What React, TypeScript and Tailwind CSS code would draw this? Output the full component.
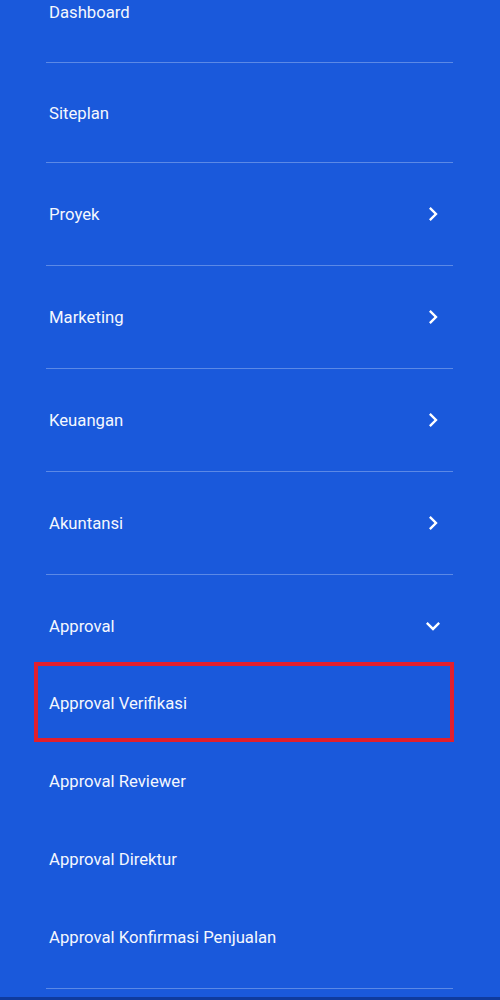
import React from "react";

const ChevronRight = () => (
  <svg width="28" height="28" viewBox="0 0 24 24" fill="white">
    <path d="M10 6L8.59 7.41 13.17 12l-4.58 4.59L10 18l6-6z" />
  </svg>
);

const ChevronDown = () => (
  <svg width="28" height="28" viewBox="0 0 24 24" fill="white">
    <path d="M16.59 8.59L12 13.17 7.41 8.59 6 10l6 6 6-6z" />
  </svg>
);

const menu = [
  { label: "Siteplan", arrow: false, h: "h-[100px]" },
  { label: "Proyek", arrow: true, h: "h-[103px]" },
  { label: "Marketing", arrow: true, h: "h-[103px]" },
  { label: "Keuangan", arrow: true, h: "h-[103px]" },
  { label: "Akuntansi", arrow: true, h: "h-[103px]" },
];

const subMenu = [
  "Approval Verifikasi",
  "Approval Reviewer",
  "Approval Direktur",
  "Approval Konfirmasi Penjualan",
];

export default function App() {
  return (
    <div
      className="w-[500px] h-[1000px] overflow-hidden bg-[#1a59db] flex flex-col"
      style={{ fontFamily: "Roboto, 'Noto Sans', sans-serif" }}
    >
      <div className="ml-[46px] w-[407px] -mt-[39px] flex flex-col text-[#f4f7fe] text-[16.7px]">
        <div className="h-[102px] flex items-center pl-[3px] pt-[2px] border-b border-[#5b89e6]">
          Dashboard
        </div>
        {menu.map((m) => (
          <div
            key={m.label}
            className={`${m.h} flex items-center justify-between pl-[3px] pr-[6px] border-b border-[#5b89e6]`}
          >
            <span className="pt-[2px]">{m.label}</span>
            {m.arrow && <ChevronRight />}
          </div>
        ))}
        <div className="border-b border-[#5b89e6] pb-[12px]">
          <div className="h-[89px] pt-[13px] flex items-center justify-between pl-[3px] pr-[6px]">
            <span className="pt-[2px]">Approval</span>
            <ChevronDown />
          </div>
          {subMenu.map((s, i) => (
            <div key={s} className="relative h-[78px] flex items-center pl-[3px]">
              <span className="pt-[2px]">{s}</span>
              {i === 0 && (
                <div className="absolute -left-[12px] -right-[1px] -top-[2px] bottom-0 border-[4px] border-[#e21f2d]" />
              )}
            </div>
          ))}
        </div>
      </div>
      <div className="mt-auto h-[3px] bg-[#0f3b9e]" />
    </div>
  );
}
